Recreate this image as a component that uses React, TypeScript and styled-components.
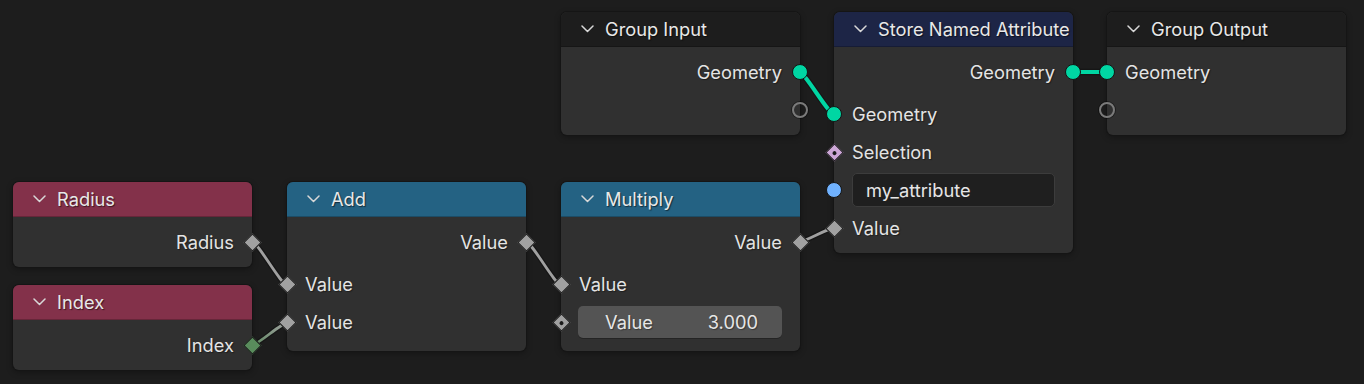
import React from "react";
import styled, { createGlobalStyle } from "styled-components";

type SocketKind = "circle" | "diamond" | "diamondDot" | "empty";

type SocketDef = {
  kind: SocketKind;
  color: string;
};

type RowDef = {
  side: "in" | "out";
  label?: string;
  socket: SocketDef;
  field?: { type: "number"; label: string; value: string } | { type: "text"; value: string };
  gapTop?: boolean;
};

type NodeDef = {
  id: string;
  title: string;
  x: number;
  y: number;
  header: string;
  padBottom?: number;
  rows: RowDef[];
};

const GEO = "#00d6a3";
const FLOAT = "#a1a1a1";
const INT = "#598c5c";
const BOOL = "#cca6d6";
const STR = "#70b2ff";

const NODES: NodeDef[] = [
  {
    id: "radius",
    title: "Radius",
    x: 13,
    y: 182,
    header: "#83314a",
    rows: [{ side: "out", label: "Radius", socket: { kind: "diamond", color: FLOAT } }],
  },
  {
    id: "index",
    title: "Index",
    x: 13,
    y: 285,
    header: "#83314a",
    rows: [{ side: "out", label: "Index", socket: { kind: "diamond", color: INT } }],
  },
  {
    id: "add",
    title: "Add",
    x: 287,
    y: 182,
    header: "#246283",
    padBottom: 10,
    rows: [
      { side: "out", label: "Value", socket: { kind: "diamond", color: FLOAT } },
      { side: "in", label: "Value", socket: { kind: "diamond", color: FLOAT }, gapTop: true },
      { side: "in", label: "Value", socket: { kind: "diamond", color: FLOAT } },
    ],
  },
  {
    id: "multiply",
    title: "Multiply",
    x: 561,
    y: 182,
    header: "#246283",
    padBottom: 10,
    rows: [
      { side: "out", label: "Value", socket: { kind: "diamond", color: FLOAT } },
      { side: "in", label: "Value", socket: { kind: "diamond", color: FLOAT }, gapTop: true },
      {
        side: "in",
        socket: { kind: "diamondDot", color: FLOAT },
        field: { type: "number", label: "Value", value: "3.000" },
      },
    ],
  },
  {
    id: "groupIn",
    title: "Group Input",
    x: 561,
    y: 12,
    header: "#1d1d1d",
    rows: [
      { side: "out", label: "Geometry", socket: { kind: "circle", color: GEO } },
      { side: "out", socket: { kind: "empty", color: "#7a7a7a" } },
    ],
  },
  {
    id: "store",
    title: "Store Named Attribute",
    x: 834,
    y: 12,
    header: "#1d2546",
    rows: [
      { side: "out", label: "Geometry", socket: { kind: "circle", color: GEO } },
      { side: "in", label: "Geometry", socket: { kind: "circle", color: GEO }, gapTop: true },
      { side: "in", label: "Selection", socket: { kind: "diamondDot", color: BOOL } },
      { side: "in", socket: { kind: "circle", color: STR }, field: { type: "text", value: "my_attribute" } },
      { side: "in", label: "Value", socket: { kind: "diamond", color: FLOAT } },
    ],
  },
  {
    id: "groupOut",
    title: "Group Output",
    x: 1107,
    y: 12,
    header: "#1d1d1d",
    rows: [
      { side: "in", label: "Geometry", socket: { kind: "circle", color: GEO } },
      { side: "in", socket: { kind: "empty", color: "#7a7a7a" } },
    ],
  },
];

type LinkDef = { from: [number, number]; to: [number, number]; color: string; colorTo?: string; width: number };

const LINKS: LinkDef[] = [
  { from: [252, 242], to: [287, 285], color: "#a0a0a0", width: 2.8 },
  { from: [252, 345], to: [287, 323], color: "#5f8a61", colorTo: "#a0a0a0", width: 2.8 },
  { from: [526, 242], to: [561, 285], color: "#a0a0a0", width: 2.8 },
  { from: [799, 242], to: [834, 228], color: "#a0a0a0", width: 2.8 },
  { from: [799, 72], to: [834, 114], color: GEO, width: 4 },
  { from: [1073, 72], to: [1107, 72], color: GEO, width: 4 },
];

const linkPath = ([x1, y1]: [number, number], [x2, y2]: [number, number]) => {
  const h = Math.min(6, (x2 - x1) * 0.2);
  return `M${x1},${y1} C${x1 + h},${y1} ${x2 - h},${y2} ${x2},${y2}`;
};

const Links: React.FC = () => (
  <LinkLayer width={1364} height={384}>
    <defs>
      {LINKS.map((l, i) =>
        l.colorTo ? (
          <linearGradient key={i} id={`lg${i}`} gradientUnits="userSpaceOnUse" x1={l.from[0]} y1={l.from[1]} x2={l.to[0]} y2={l.to[1]}>
            <stop offset="0" stopColor={l.color} />
            <stop offset="1" stopColor={l.colorTo} />
          </linearGradient>
        ) : null
      )}
    </defs>
    {LINKS.map((l, i) => (
      <g key={i} fill="none" strokeLinecap="round">
        <path d={linkPath(l.from, l.to)} stroke="#161616" strokeWidth={l.width + 2.5} />
        <path d={linkPath(l.from, l.to)} stroke={l.colorTo ? `url(#lg${i})` : l.color} strokeWidth={l.width} />
      </g>
    ))}
  </LinkLayer>
);

const Chevron: React.FC = () => (
  <svg width="13" height="8" viewBox="0 0 13 8">
    <polyline points="1,1 6.5,6.5 12,1" fill="none" stroke="#d8d8d8" strokeWidth="1.5" strokeLinecap="round" strokeLinejoin="round" />
  </svg>
);

const NodeRow: React.FC<{ row: RowDef }> = ({ row }) => (
  <Row $side={row.side} $gapTop={!!row.gapTop}>
    <Socket $kind={row.socket.kind} $color={row.socket.color} $side={row.side} />
    {row.label && <Label>{row.label}</Label>}
    {row.field?.type === "number" && (
      <NumberField>
        <span>{row.field.label}</span>
        <span>{row.field.value}</span>
      </NumberField>
    )}
    {row.field?.type === "text" && <TextField>{row.field.value}</TextField>}
  </Row>
);

const Node: React.FC<{ node: NodeDef }> = ({ node }) => (
  <NodeBox $x={node.x} $y={node.y}>
    <Header $color={node.header}>
      <Chevron />
      <Title>{node.title}</Title>
    </Header>
    <Body $padBottom={node.padBottom ?? 6}>
      {node.rows.map((r, i) => (
        <NodeRow key={i} row={r} />
      ))}
    </Body>
  </NodeBox>
);

export default function App() {
  return (
    <>
      <GlobalStyle />
      <Canvas>
        <Links />
        {NODES.map((n) => (
          <Node key={n.id} node={n} />
        ))}
      </Canvas>
    </>
  );
}

const GlobalStyle = createGlobalStyle`
  html, body {
    margin: 0;
    padding: 0;
    background: #1d1d1d;
    font-family: Inter, "Noto Sans", sans-serif;
  }
`;

const Canvas = styled.div`
  position: relative;
  width: 1364px;
  height: 384px;
  overflow: hidden;
  background: #1d1d1d;
`;

const LinkLayer = styled.svg`
  position: absolute;
  left: 0;
  top: 0;
  z-index: 0;
  pointer-events: none;
`;

const NodeBox = styled.div<{ $x: number; $y: number }>`
  position: absolute;
  left: ${(p) => p.$x}px;
  top: ${(p) => p.$y}px;
  width: 239px;
  display: flex;
  flex-direction: column;
  border-radius: 6px;
  background: #303030;
  box-shadow: 0 0 0 1px #151515, 0 2px 6px rgba(0, 0, 0, 0.35);
  z-index: 1;
`;

const Header = styled.div<{ $color: string }>`
  height: 35px;
  display: flex;
  align-items: center;
  gap: 11px;
  padding-left: 20px;
  background: ${(p) => p.$color};
  border-radius: 6px 6px 0 0;
  border-bottom: 1px solid rgba(0, 0, 0, 0.22);
  box-sizing: border-box;
  overflow: hidden;
`;

const Title = styled.span`
  font-size: 18.3px;
  color: #e8e8e8;
  white-space: nowrap;
  text-shadow: 1px 1px 1px rgba(0, 0, 0, 0.55);
`;

const Body = styled.div<{ $padBottom: number }>`
  display: flex;
  flex-direction: column;
  padding: 6px 0 ${(p) => p.$padBottom}px;
`;

const Row = styled.div<{ $side: "in" | "out"; $gapTop: boolean }>`
  position: relative;
  height: 38px;
  display: flex;
  align-items: center;
  justify-content: ${(p) => (p.$side === "out" ? "flex-end" : "flex-start")};
  padding: 0 18px 0 18px;
  margin-top: ${(p) => (p.$gapTop ? 4 : 0)}px;
`;

const Label = styled.span`
  font-size: 18.3px;
  color: #e4e4e4;
  white-space: nowrap;
  text-shadow: 1px 1px 1px rgba(0, 0, 0, 0.4);
`;

const Socket = styled.span<{ $kind: SocketKind; $color: string; $side: "in" | "out" }>`
  position: absolute;
  top: 50%;
  ${(p) => (p.$side === "out" ? "right: -8px;" : "left: -8px;")}
  box-sizing: border-box;
  z-index: 3;
  ${(p) => {
    switch (p.$kind) {
      case "circle":
        return `
          width: 16px; height: 16px; margin-top: -8px;
          border-radius: 50%;
          background: ${p.$color};
          border: 1.5px solid #151515;
        `;
      case "empty":
        return `
          width: 16px; height: 16px; margin-top: -8px;
          border-radius: 50%;
          background: transparent;
          border: 2px solid ${p.$color};
          box-shadow: 0 0 0 1px rgba(0,0,0,0.4);
        `;
      default:
        return `
          width: 13px; height: 13px; margin-top: -6.5px;
          ${p.$side === "out" ? "right: -6.5px;" : "left: -6.5px;"}
          transform: rotate(45deg);
          background: ${p.$color};
          border: 1px solid #1a1a1a;
        `;
    }
  }}
  &::after {
    content: "";
    display: ${(p) => (p.$kind === "diamondDot" ? "block" : "none")};
    position: absolute;
    left: 50%;
    top: 50%;
    width: 4px;
    height: 4px;
    margin: -2px 0 0 -2px;
    border-radius: 50%;
    background: #1a1a1a;
  }
`;

const NumberField = styled.div`
  flex: 1;
  height: 32px;
  margin-left: -1px;
  display: flex;
  align-items: center;
  justify-content: space-between;
  padding: 0 24px 0 27px;
  background: #545454;
  border-radius: 5px;
  font-size: 18.3px;
  color: #e6e6e6;
  text-shadow: 1px 1px 1px rgba(0, 0, 0, 0.35);
  box-shadow: 0 1px 0 rgba(0, 0, 0, 0.25);
`;

const TextField = styled.div`
  flex: 1;
  height: 34px;
  display: flex;
  align-items: center;
  padding: 0 13px;
  background: #1f1f1f;
  border: 1px solid #3c3c3c;
  border-radius: 5px;
  box-sizing: border-box;
  font-size: 18.3px;
  color: #e6e6e6;
`;
